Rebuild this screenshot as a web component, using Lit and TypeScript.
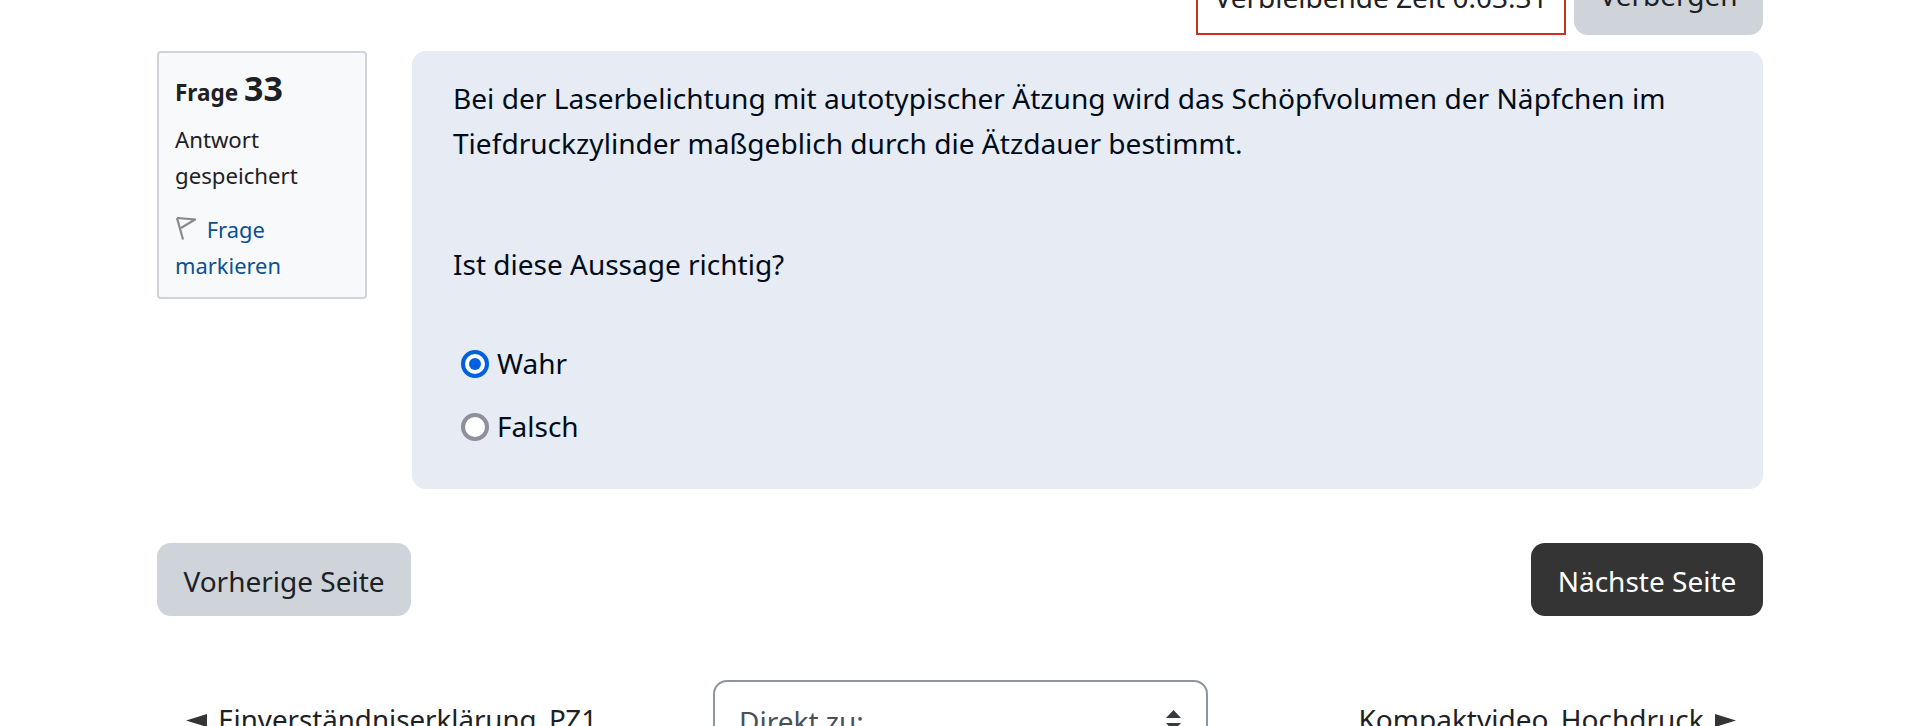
import { LitElement, html, css } from "lit";
import { customElement } from "lit/decorators.js";

@customElement("app-root")
export class AppRoot extends LitElement {
  static styles = css`
    :host {
      display: block;
      height: 726px;
      overflow: hidden;
      background: #fff;
      color: #1d2125;
      font-family: "Noto Sans", "Open Sans", sans-serif;
      font-size: 28px;
      line-height: 45px;
    }
    .page {
      padding: 0 167px 0 157px;
    }
    .timer-row {
      display: flex;
      justify-content: flex-end;
      gap: 8px;
      margin-top: -33px;
      height: 68px;
    }
    .timer {
      box-sizing: border-box;
      width: 370px;
      height: 68px;
      border: 2px solid #ca3120;
      text-align: center;
      line-height: 56px;
    }
    .btn {
      box-sizing: border-box;
      display: flex;
      align-items: center;
      justify-content: center;
      height: 73px;
      padding: 0 26px;
      border-radius: 14px;
      background: #ced4da;
      color: #1d2125;
    }
    .btn span {
      position: relative;
      top: 2px;
    }
    .hide {
      width: 189px;
      height: 68px;
      padding-bottom: 12px;
    }
    .question {
      display: flex;
      gap: 45px;
      margin-top: 16px;
    }
    .info {
      box-sizing: border-box;
      flex: none;
      width: 210px;
      height: 248px;
      padding: 10px 16px;
      background: #f8f9fa;
      border: 2px solid #ced4da;
      border-radius: 4px;
      font-size: 22.2px;
      line-height: 36px;
    }
    .num {
      font-size: 22.5px;
      font-weight: 700;
      line-height: 50px;
      white-space: nowrap;
    }
    .num b {
      font-size: 34px;
      font-weight: 700;
    }
    .status {
      margin-top: 4px;
    }
    .flag {
      margin-top: 18px;
      color: #0a5095;
      font-size: 21.9px;
    }
    .flag svg {
      width: 21px;
      height: 23px;
      margin-right: 5px;
      vertical-align: -2px;
    }
    .content {
      box-sizing: border-box;
      flex: 1;
      height: 438px;
      padding: 25px 41px 0;
      background: #e7ebf3;
      border-radius: 14px;
      color: #000c1a;
    }
    .content p {
      margin: 0;
    }
    .lead {
      font-size: 28.1px;
    }
    .prompt {
      margin-top: 76px !important;
    }
    .answers {
      display: flex;
      flex-direction: column;
      gap: 18px;
      margin-top: 54px;
      padding-left: 8px;
    }
    .answer {
      display: flex;
      align-items: center;
      gap: 8px;
      height: 45px;
      line-height: 45px;
    }
    .radio {
      box-sizing: border-box;
      flex: none;
      width: 28px;
      height: 28px;
      border-radius: 50%;
      background: #fff;
      border: 4px solid #8f8f9d;
    }
    .radio.on {
      border-color: #0060df;
      display: flex;
      align-items: center;
      justify-content: center;
    }
    .radio.on::after {
      content: "";
      width: 12px;
      height: 12px;
      border-radius: 50%;
      background: #0060df;
    }
    .nav {
      display: flex;
      justify-content: space-between;
      margin-top: 54px;
    }
    .prev {
      width: 254px;
    }
    .next {
      width: 232px;
      background: #343434;
      color: #fff;
    }
    .activity {
      display: grid;
      grid-template-columns: 556px 495px 1fr;
      margin-top: 64px;
    }
    .link {
      padding-top: 17px;
      padding-left: 29px;
      white-space: nowrap;
      font-size: 27.7px;
    }
    .link.right {
      padding-left: 0;
      padding-right: 27px;
      text-align: right;
      font-size: 28px;
    }
    .arrow {
      width: 21px;
      height: 13px;
      vertical-align: 3px;
      margin-right: 4px;
    }
    .link.right .arrow {
      margin: 0 0 0 4px;
    }
    .select {
      box-sizing: border-box;
      display: flex;
      align-items: flex-start;
      justify-content: space-between;
      height: 80px;
      padding: 17px 24px;
      border: 2px solid #8f959e;
      border-radius: 14px;
      color: #495057;
    }
    .select svg {
      width: 17px;
      height: 24px;
      margin-top: 9px;
    }
  `;

  render() {
    return html`
      <div class="page">
        <div class="timer-row">
          <div class="timer">Verbleibende Zeit 0:03:31</div>
          <div class="btn hide">Verbergen</div>
        </div>
        <div class="question">
          <aside class="info">
            <div class="num">Frage <b>33</b></div>
            <div class="status">Antwort gespeichert</div>
            <div class="flag">
              <svg viewBox="0 0 21 23" fill="none" stroke="#8a8a8a" stroke-width="2.2">
                <path d="M2 1 L8 22.5" />
                <path d="M2 1 L20 2.5 L6 11" />
              </svg>
              Frage markieren
            </div>
          </aside>
          <section class="content">
            <p class="lead">
              Bei der Laserbelichtung mit autotypischer Ätzung wird das
              Schöpfvolumen der Näpfchen im Tiefdruckzylinder maßgeblich durch
              die Ätzdauer bestimmt.
            </p>
            <p class="prompt">Ist diese Aussage richtig?</p>
            <div class="answers">
              <div class="answer"><span class="radio on"></span>Wahr</div>
              <div class="answer"><span class="radio"></span>Falsch</div>
            </div>
          </section>
        </div>
        <div class="nav">
          <div class="btn prev"><span>Vorherige Seite</span></div>
          <div class="btn next"><span>Nächste Seite</span></div>
        </div>
        <div class="activity">
          <div class="link">
            <svg class="arrow" viewBox="0 0 21 13" fill="#343434"><path d="M0 6.5 L21 0 V13 Z" /></svg>
            Einverständniserklärung_PZ1
          </div>
          <div class="select">
            <span>Direkt zu:</span>
            <svg viewBox="0 0 17 24" fill="#343a40">
              <path d="M8.5 2 L16 10 H1 Z M8.5 23 L1 15 H16 Z" />
            </svg>
          </div>
          <div class="link right">
            Kompaktvideo_Hochdruck
            <svg class="arrow" viewBox="0 0 21 13" fill="#343434"><path d="M21 6.5 L0 0 V13 Z" /></svg>
          </div>
        </div>
      </div>
    `;
  }
}
